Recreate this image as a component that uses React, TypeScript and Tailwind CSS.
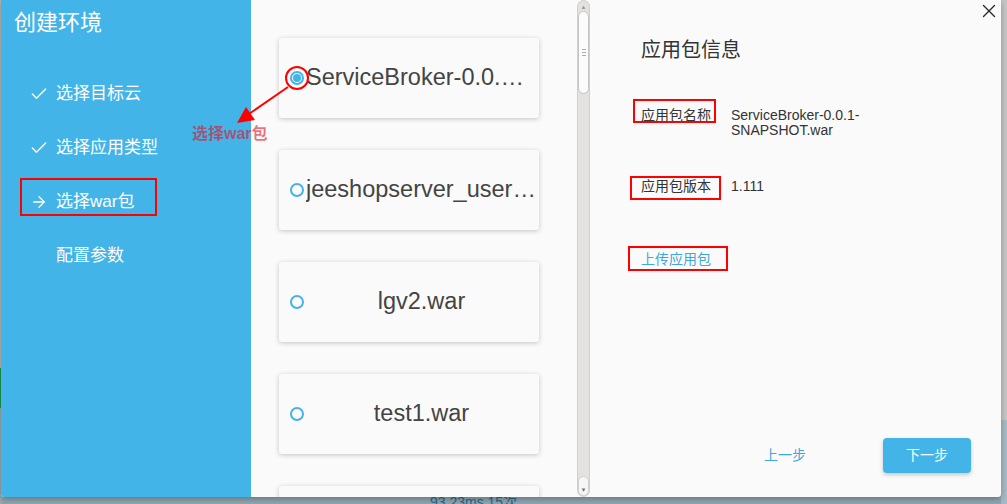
import { FC } from "react";
import { Check, ArrowRight, X } from "lucide-react";

const font = "font-['Liberation_Sans','Noto_Sans_CJK_SC',sans-serif]";

const steps = [
  { label: "选择目标云", icon: "check" },
  { label: "选择应用类型", icon: "check" },
  { label: "选择war包", icon: "arrow" },
  { label: "配置参数", icon: "none" },
];

const packages = [
  { name: "ServiceBroker-0.0.1-SNAPSHOT.war", selected: true },
  { name: "jeeshopserver_user_center.war", selected: false },
  { name: "lgv2.war", selected: false },
  { name: "test1.war", selected: false },
  { name: "demo.war", selected: false },
];

const Radio: FC<{ checked: boolean }> = ({ checked }) => (
  <span className="w-[14px] h-[14px] shrink-0 rounded-full border-2 border-[#41b5e8] flex items-center justify-center">
    {checked && <span className="w-[8px] h-[8px] rounded-full bg-[#41b5e8]" />}
  </span>
);

const App: FC = () => {
  return (
    <div className={`relative w-[1007px] h-[504px] overflow-hidden bg-[#8fa6b1] ${font}`}>
      {/* page behind the dialog */}
      <div className="flex h-full">
        <div className="w-[1px] flex flex-col">
          <div className="h-[368px] bg-[#b8b8b8]" />
          <div className="h-[40px] bg-[#1a9a4a]" />
          <div className="flex-1 bg-[#9aaab2]" />
        </div>
        <div className="flex-1 pt-[494px] pl-[429px] text-[14px] leading-[16px] text-[#2d6586]">
          93.23ms,15次
        </div>
        <div className="w-[6px] flex flex-col">
          <div className="h-[420px] bg-[#c6c6c6]" />
          <div className="flex-1 bg-[#a7bac4]" />
        </div>
      </div>

      {/* dialog */}
      <div className="absolute left-[1px] top-0 w-[1000px] h-[497px] flex rounded-b-[3px] overflow-hidden bg-[#fafafa] shadow-[0_2px_6px_rgba(0,0,0,0.3)]">
        {/* sidebar */}
        <div className="w-[250px] shrink-0 bg-[#42b4e8] text-white">
          <div className="h-[45px] flex items-center pl-[13px] text-[22px]">创建环境</div>
          <ul className="mt-[22px]">
            {steps.map((s) => (
              <li key={s.label} className="h-[54px] flex items-center pl-[28px] text-[17px]">
                <span className="w-[20px] h-[20px] flex items-center justify-center">
                  {s.icon === "check" && <Check size={20} strokeWidth={1.6} />}
                  {s.icon === "arrow" && <ArrowRight size={18} strokeWidth={1.7} />}
                </span>
                <span className="ml-[7px]">{s.label}</span>
              </li>
            ))}
          </ul>
        </div>

        {/* package list */}
        <div className="w-[340px] shrink-0 flex">
          <div className="flex-1 overflow-hidden pt-[38px] pl-[28px]">
            <div className="flex flex-col gap-[32px]">
              {packages.map((p) => (
                <div
                  key={p.name}
                  className="w-[260px] h-[80px] shrink-0 flex items-center pl-[11px] pr-[2px] rounded-[3px] bg-[#fafafa] shadow-[0_1px_5px_rgba(0,0,0,0.22)]"
                >
                  <Radio checked={p.selected} />
                  <span className="flex-1 min-w-0 ml-[2px] truncate text-center text-[23.5px] text-[#444]">
                    {p.name}
                  </span>
                </div>
              ))}
            </div>
          </div>
          {/* scrollbar */}
          <div className="w-[13px] mr-[1px] flex flex-col items-center rounded-full border border-[#cfcfcf] bg-[#e3e2e1]">
            <span className="mt-[3px] text-[6px] leading-[6px] text-[#999]">▲</span>
            <div className="mt-[1px] w-[11px] h-[83px] rounded-full border border-[#c4c4c4] bg-[#fbfbfb] flex flex-col items-center justify-center gap-[2px]">
              <span className="w-[4px] h-[1px] bg-[#aaa]" />
              <span className="w-[4px] h-[1px] bg-[#aaa]" />
              <span className="w-[4px] h-[1px] bg-[#aaa]" />
            </div>
            <div className="flex-1" />
            <div className="w-[11px] h-[20px] rounded-full bg-[#f6f6f6] border border-[#cfcfcf] flex items-end justify-center pb-[2px]">
              <span className="text-[6px] leading-[6px] text-[#777]">▼</span>
            </div>
          </div>
        </div>

        {/* info panel */}
        <div className="flex-1 flex flex-col pl-[50px] pr-[30px] pt-[36px] pb-[24px] relative">
          <button className="absolute right-[1px] top-0 text-[#2a2a2a]">
            <X size={22} strokeWidth={1.5} />
          </button>
          <h2 className="text-[20px] leading-[28px] text-[#333]">应用包信息</h2>
          <div className="mt-[44px] flex text-[14px] leading-[15px] text-[#333]">
            <span className="w-[90px] shrink-0">应用包名称</span>
            <span className="w-[150px]">ServiceBroker-0.0.1-SNAPSHOT.war</span>
          </div>
          <div className="mt-[41px] flex text-[14px] leading-[15px] text-[#333]">
            <span className="w-[90px] shrink-0">应用包版本</span>
            <span>1.111</span>
          </div>
          <div className="mt-[58px] text-[14px] leading-[15px] text-[#3fa7e0]">上传应用包</div>
          <div className="flex-1" />
          <div className="flex items-center justify-end">
            <button className="w-[88px] h-[35px] mr-[54px] text-[14px] text-[#3fa7e0]">上一步</button>
            <button className="w-[88px] h-[35px] rounded-[4px] bg-[#42b4e8] text-[14px] text-white shadow-[0_2px_4px_rgba(0,0,0,0.2)]">
              下一步
            </button>
          </div>
        </div>
      </div>

      {/* red annotations */}
      <svg className="absolute inset-0 pointer-events-none" width="1007" height="504" viewBox="0 0 1007 504">
        <rect x="21" y="179" width="135" height="36" fill="none" stroke="#f00" strokeWidth="2" />
        <circle cx="297" cy="78" r="11" fill="none" stroke="#f00" strokeWidth="2" />
        <line x1="288" y1="87" x2="246" y2="116" stroke="#f00" strokeWidth="2" />
        <polygon points="237,123 246,107 255,120" fill="#f00" />
        <rect x="634" y="100" width="81" height="22" fill="none" stroke="#f00" strokeWidth="2" />
        <rect x="631" y="177" width="89" height="22" fill="none" stroke="#f00" strokeWidth="2" />
        <rect x="629" y="247" width="98" height="23" fill="none" stroke="#f00" strokeWidth="2" />
      </svg>
      <div className="absolute left-[192px] top-[124px] text-[16px] leading-[20px] font-bold text-[rgba(220,20,40,0.6)] pointer-events-none">
        选择war包
      </div>
    </div>
  );
};

export default App;
